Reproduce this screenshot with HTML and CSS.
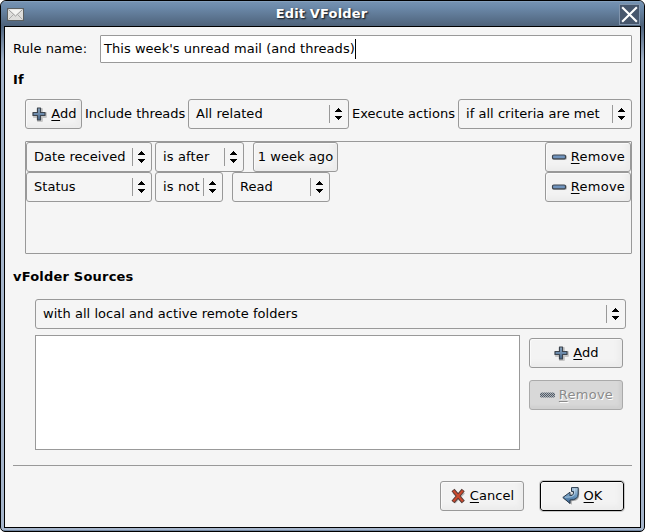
FILE: index.html
```html
<!DOCTYPE html>
<html lang="en">
<head>
<meta charset="utf-8">
<title>Edit VFolder</title>
<link rel="stylesheet" href="styles.css">
</head>
<body>
<svg width="0" height="0" class="defs">
  <defs>
    <linearGradient id="steel" x1="0" y1="0" x2="0" y2="1"><stop offset="0" stop-color="#91acc8"/><stop offset="1" stop-color="#46678c"/></linearGradient>
    <linearGradient id="arrow" x1="0" y1="0" x2="0" y2="1"><stop offset="0" stop-color="#b6cee2"/><stop offset=".55" stop-color="#6795bd"/><stop offset="1" stop-color="#355f8b"/></linearGradient>
    <pattern id="dither" width="2" height="2" patternUnits="userSpaceOnUse"><rect width="2" height="2" fill="#aab2bb"/><rect width="1" height="1" fill="#555c64"/><rect x="1" y="1" width="1" height="1" fill="#555c64"/></pattern>
    <symbol id="updown" viewBox="0 0 7 12"><path d="M3 0h1v1h1v1h1v1h1v1H0V3h1V2h1V1h1zM0 8h7v1H6v1H5v1H4v1H3v-1H2v-1H1V9H0z" shape-rendering="crispEdges"/></symbol>
    <symbol id="plus" viewBox="0 0 16 16"><path d="M6.500 2.500h4v4h4v4h-4v4h-4v-4h-4v-4h4z" transform="translate(.4 .5)" fill="none" stroke="#999" stroke-opacity=".5" stroke-width="2" stroke-linejoin="round"/><path d="M6.500 2h3v4.500H14v3H9.500V14h-3V9.500H2v-3h4.500z" fill="url(#steel)" stroke="#3d454e" stroke-width="1.200" stroke-linejoin="round"/></symbol>
    <symbol id="minus" viewBox="0 0 16 16"><rect x="1" y="6" width="15" height="5" rx="2" fill="#bbb"/><rect x="1.500" y="6" width="13" height="3.800" rx="1.300" fill="#6f93bd" stroke="#3d454e" stroke-width="1.200"/></symbol>
    <symbol id="minus-off" viewBox="0 0 16 16"><rect x="1" y="5.500" width="15" height="5" rx="1.500" fill="url(#dither)"/></symbol>
  </defs>
</svg>
<div class="window">
  <header class="titlebar">
    <svg class="mail" width="17" height="13" viewBox="0 0 17 13"><rect x=".5" y=".5" width="16" height="12" fill="#dededc" stroke="#5c6061"/><path d="M1.500 11.500L6.500 6.500M15.500 11.500L10.500 6.500" stroke="#aaa" fill="none"/><path d="M1.500 1.500L8.500 8L15.500 1.500" stroke="#999" fill="#f4f4f2"/></svg>
    <h1>Edit VFolder</h1>
    <div class="close"><svg width="20" height="20" viewBox="0 0 20 20"><path d="M3 3L17 17M17 3L3 17" stroke="#fff" stroke-width="2"/></svg></div>
  </header>
  <main class="content">
    <div class="name-row"><span>Rule name:</span><div class="entry">This week's unread mail (and threads)<i></i></div></div>
    <h2 class="if">If</h2>
    <div class="options">
      <div class="button add"><svg width="16" height="16"><use href="#plus"/></svg><span><u>A</u>dd</span></div>
      <span class="include">Include threads</span>
      <div class="combo related"><span>All related</span><b><svg width="7" height="12"><use href="#updown"/></svg></b></div>
      <span class="execute">Execute actions</span>
      <div class="combo criteria"><span>if all criteria are met</span><b><svg width="7" height="12"><use href="#updown"/></svg></b></div>
    </div>
    <div class="rules">
      <div class="rule">
        <div class="combo field"><span>Date received</span><b><svg width="7" height="12"><use href="#updown"/></svg></b></div>
        <div class="combo after"><span>is after</span><b><svg width="7" height="12"><use href="#updown"/></svg></b></div>
        <div class="button week"><span>1 week ago</span></div>
        <div class="button remove"><svg width="16" height="16"><use href="#minus"/></svg><span><u>R</u>emove</span></div>
      </div>
      <div class="rule">
        <div class="combo field"><span>Status</span><b><svg width="7" height="12"><use href="#updown"/></svg></b></div>
        <div class="combo isnot"><span>is not</span><b><svg width="7" height="12"><use href="#updown"/></svg></b></div>
        <div class="combo read"><span>Read</span><b><svg width="7" height="12"><use href="#updown"/></svg></b></div>
        <div class="button remove"><svg width="16" height="16"><use href="#minus"/></svg><span><u>R</u>emove</span></div>
      </div>
    </div>
    <h2 class="sources-title">vFolder Sources</h2>
    <div class="combo sources"><span>with all local and active remote folders</span><b><svg width="7" height="12"><use href="#updown"/></svg></b></div>
    <div class="folders">
      <div class="list"></div>
      <div class="side">
        <div class="button"><svg width="16" height="16"><use href="#plus"/></svg><span><u>A</u>dd</span></div>
        <div class="button disabled"><svg width="16" height="16"><use href="#minus-off"/></svg><span><u>R</u>emove</span></div>
      </div>
    </div>
    <footer class="actions">
      <div class="button"><svg width="16" height="16" viewBox="0 0 16 16"><path d="M4 4L13.500 14M13.500 4L4 14" stroke="#bbb" stroke-width="4"/><path d="M3 2L13.200 14M13.200 2L3 14" stroke="#573a35" stroke-width="4"/><path d="M3.400 2.600L12.800 13.400M12.800 2.600L3.400 13.400" stroke="#cc4a2e" stroke-width="2.200"/></svg><span><u>C</u>ancel</span></div>
      <div class="button default"><svg width="18" height="18" viewBox="0 0 18 18"><path d="M9 .6H16.400V7Q16.400 13.500 9 13.500V17L.8 11L9 5.500V8.800Q11.800 8.800 11.800 6V4.800H9z" transform="translate(.8 .8)" fill="#aaa"/><path d="M9.500 .6H16.200V7Q16.200 13 8 13V16.500L.8 10.500L8 5.200V8.800Q11.500 8.800 11.500 6V4.500H9.500z" fill="url(#arrow)" stroke="#28394b" stroke-linejoin="round"/><path d="M12.500 1.500V6.500Q12.200 9.500 7.200 10L3 10.200" fill="none" stroke="#c3d8e8" stroke-opacity=".7"/></svg><span><u>O</u>K</span></div>
    </footer>
  </main>
</div>
</body>
</html>
```
FILE: styles.css
```css
* { box-sizing: border-box; }
body { margin: 0; background: #fff; font: 13px/16px "DejaVu Sans", sans-serif; letter-spacing: .04px; color: #000; }
.defs { position: absolute; }
.window {
  width: 645px; height: 532px; padding: 0 3px 2px;
  border: 1px solid #000; border-radius: 6px 6px 5px 5px;
  background: linear-gradient(#6685a6 0, #50657f 26px, #a5b5cb 60px, #a5b5cb 529px, #405978 530px);
  overflow: hidden;
}
.titlebar {
  display: flex; align-items: center; height: 25px; margin: 0 -3px; padding: 0 4px 0 6px;
  background: linear-gradient(#7592b2, #6c8aaa 5px, #4e627a);
  border-top: 1px solid #84a0bd;
}
.mail { flex: none; }
h1 {
  flex: 1; margin: 0; text-align: center; font-size: 13px; line-height: 16px; color: #fff;
  letter-spacing: .16px; text-shadow: 1px 1px 1px #222c38, 1px 1px 2px #333;
}
.close { width: 21px; height: 21px; border: 1px solid #8195ad; background: #46566c; }
.close svg { display: block; margin: -1px 0 0 -1px; width: 21px; height: 21px; }
.content {
  height: 502px; width: 637px; padding: 8px 8px 0; border: 1px solid #000; background: #f5f5f5;
}
.name-row { display: flex; align-items: center; justify-content: space-between; }
.entry {
  display: flex; align-items: center; width: 532px; height: 28px; padding-left: 3px;
  border: 1px solid #999; border-radius: 1px; background: #fff; white-space: pre;
}
.entry i { width: 1px; height: 20px; background: #000; }
h2 { margin: 0; font-size: 13px; line-height: 16px; }
.if { margin-top: 9px; }
.options { display: flex; align-items: center; height: 30px; margin: 11px 0 0 12px; white-space: nowrap; }
.include { width: 106px; padding-left: 3px; letter-spacing: -.04px; }
.execute { width: 109px; padding-left: 3px; letter-spacing: 0; }
.combo, .button {
  display: flex; align-items: center; flex: none; height: 30px;
  border: 1px solid #999; border-radius: 3px; white-space: nowrap;
}
.combo { justify-content: space-between; padding: 0 6px 0 7px; }
.combo b { display: flex; align-items: center; height: 18px; padding-left: 5px; border-left: 1px solid #999; }
.button {
  justify-content: center; gap: 4px; background: #f3f3f3;
  box-shadow: inset 1px 1px 0 #fafafa, inset -4px -4px 4px #ececec;
}
.button svg { flex: none; }
u { text-decoration: underline; text-underline-offset: 2px; text-decoration-thickness: 1px; text-decoration-skip-ink: none; }
.add { width: 57px; padding-left: 1px; }
.related { width: 161px; }
.criteria { width: 174px; }
.rules { width: 607px; height: 113px; margin: 12px 0 0 12px; border: 1px solid #999; border-radius: 1px; }
.rule { display: flex; }
.field { width: 126px; margin-right: 3px; }
.after { width: 89px; margin-right: 9px; letter-spacing: .14px; }
.isnot { width: 68px; margin-right: 9px; letter-spacing: .14px; }
.week { width: 85px; }
.read { width: 98px; }
.remove { width: 86px; margin-left: auto; }
.remove, .disabled { letter-spacing: .25px; }
.sources-title { margin-top: 15px; letter-spacing: .2px; }
.sources { width: 591px; margin: 14px 0 0 22px; }
.folders { display: flex; gap: 9px; margin: 6px 0 0 22px; }
.list { width: 485px; height: 115px; border: 1px solid #999; background: #fff; }
.side { display: flex; flex-direction: column; gap: 12px; width: 94px; padding-top: 3px; }
.disabled { color: #8b8b8b; background: #d8d8d8; border-color: #aaa; box-shadow: inset -3px -3px 3px #d0d0d0; text-shadow: 1px 1px #fff; }
.actions {
  display: flex; justify-content: flex-end; gap: 16px; margin-top: 15px; padding: 15px 8px 0 0;
  border-top: 1px solid #999;
}
.actions .button { width: 84px; }
.actions .default { border-color: #000; outline: 1px solid #c8c8c8; }
```
